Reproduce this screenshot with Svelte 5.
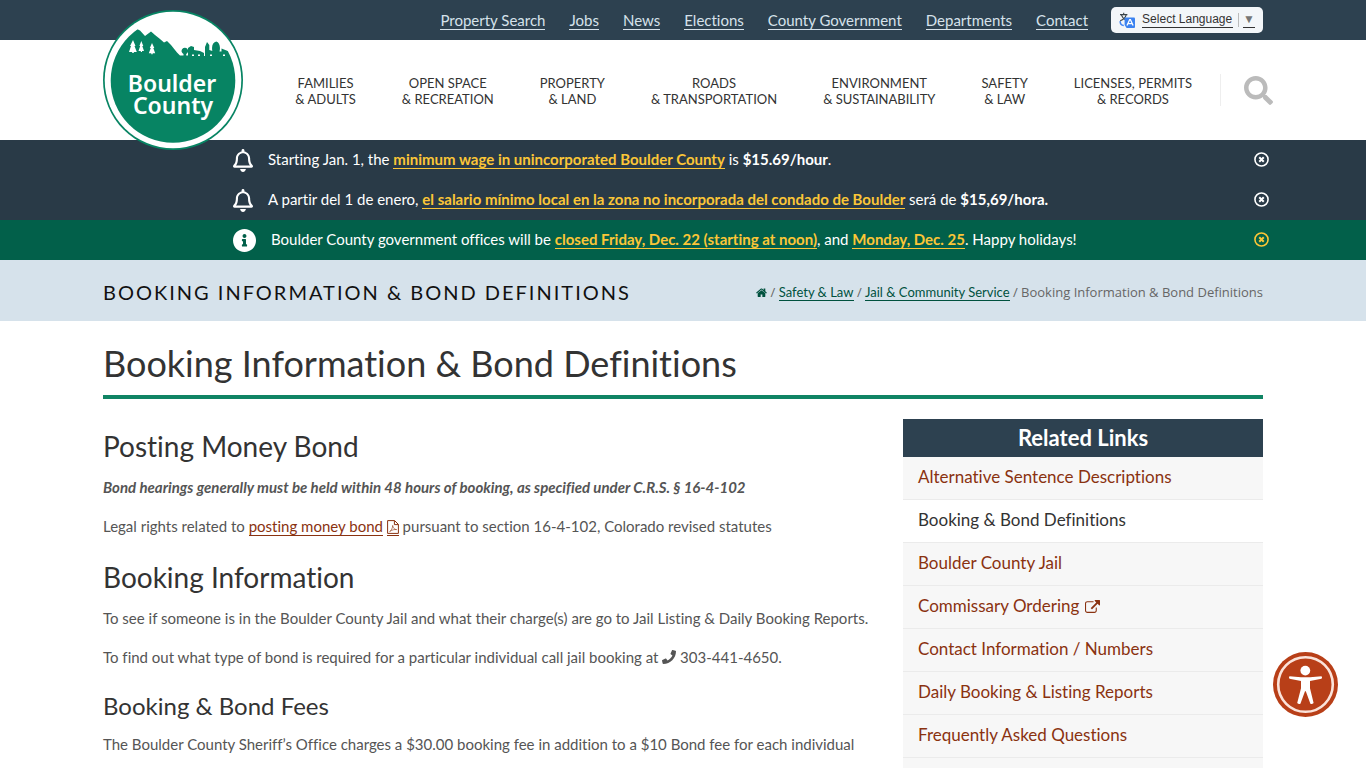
<script>
  const topLinks = ['Property Search', 'Jobs', 'News', 'Elections', 'County Government', 'Departments', 'Contact'];
  const sections = [
    ['Families', '& Adults'],
    ['Open Space', '& Recreation'],
    ['Property', '& Land'],
    ['Roads', '& Transportation'],
    ['Environment', '& Sustainability'],
    ['Safety', '& Law'],
    ['Licenses, Permits', '& Records']
  ];
  const related = [
    { label: 'Alternative Sentence Descriptions' },
    { label: 'Booking & Bond Definitions', current: true },
    { label: 'Boulder County Jail' },
    { label: 'Commissary Ordering', external: true },
    { label: 'Contact Information / Numbers' },
    { label: 'Daily Booking & Listing Reports' },
    { label: 'Frequently Asked Questions' }
  ];
</script>

{#snippet bell()}
  <svg class="bell" viewBox="0 0 448 512" aria-hidden="true"><path fill="currentColor" d="M439.39 362.29c-19.32-20.76-55.47-51.99-55.47-154.29 0-77.7-54.48-139.9-127.94-155.16V32c0-17.67-14.32-32-31.98-32s-31.98 14.33-31.98 32v20.84C118.56 68.1 64.08 130.3 64.08 208c0 102.3-36.15 133.53-55.47 154.29-6 6.45-8.66 14.16-8.61 21.71.11 16.4 12.98 32 32.1 32h383.8c19.12 0 32-15.6 32.1-32 .05-7.55-2.61-15.27-8.61-21.71zM67.53 368c21.22-27.97 44.42-74.33 44.53-159.42 0-.2-.06-.38-.06-.58 0-61.86 50.14-112 112-112s112 50.14 112 112c0 .2-.06.38-.06.58.11 85.1 23.31 131.46 44.53 159.42H67.53zM224 512c35.32 0 63.97-28.65 63.97-64H160.03c0 35.35 28.65 64 63.97 64z"/></svg>
{/snippet}

{#snippet close()}
  <button class="close" type="button" aria-label="Dismiss">
    <svg viewBox="0 0 16 16" aria-hidden="true"><circle cx="8" cy="8" r="7" fill="none" stroke="currentColor" stroke-width="1.700"/><path d="M5.600 5.600l4.800 4.800M10.400 5.600l-4.800 4.800" stroke="currentColor" stroke-width="2.100"/></svg>
  </button>
{/snippet}

<div class="page">
  <header>
    <div class="topbar">
      <div class="wrap topbar-in">
        <nav class="top-links" aria-label="Quick links">
          {#each topLinks as l}<a href="#top">{l}</a>{/each}
        </nav>
        <label class="translate">
          <svg viewBox="0 0 16 16" aria-hidden="true">
            <path d="M1 2.6h7.4M4.7.8v1.8M7.2 2.8C6.500 5.400 4.200 7.600 1.200 8.700M2.500 3.200c.8 2 2.600 4 4.400 5.200" fill="none" stroke="#3a4448" stroke-width="1.100"/>
            <path d="M1.300 9.200c-.4 2.700 1 4.300 3.500 4.300" fill="none" stroke="#4285f4" stroke-width="1.600"/>
            <path d="M5.600 5.600H15a1 1 0 0 1 1 1V15a1 1 0 0 1-1 1H7.600L5.600 13z" fill="#3b82f0"/>
            <path d="M8 13.600l2.700-6h.7l2.700 6M9 11.600h4" fill="none" stroke="#fff" stroke-width="1.300"/>
          </svg>
          <select aria-label="Select Language"><option>Select Language</option></select>
          <span class="bar"></span>
          <span class="arrow">▼</span>
        </label>
      </div>
    </div>

    <div class="wrap masthead">
      <a class="logo" href="#home" aria-label="Boulder County home">
        <svg viewBox="0 0 140 140">
          <defs><clipPath id="disc"><circle cx="70" cy="70.500" r="62.300"/></clipPath></defs>
          <circle cx="70" cy="70" r="70" fill="#078463"/>
          <circle cx="70" cy="70" r="68.300" fill="#fff"/>
          <g clip-path="url(#disc)">
            <path fill="#078463" d="M0 40L19 32L24 26L28 23.500L34 19L37 20.500L42 26L48 21.500L52 25L57 29L61 32.500L64 31L68 35L74 42.500L77 45.600H80.500V44a3.300 3.300 0 1 1 2.700 0V45.600H85V38l3-2l3 1v3l6 1l4 2v3h1V37l2-5l2.300 3v5l3 1c-1-6 1-9 4-9.500c3 1 4.500 5 3.200 10h2v-3l5 2l3 1v-3.500h5V46H140V140H0z"/>
            <path fill="#fff" d="M30 30l2.500 6h-1l2.300 6h-3v1h-1.600v-1H26l2-6h-1zM38.300 31l2 5h-1l1.700 5h-2v1h-1.200v-1H35.500l1.700-5h-.8zM49 33l2.300 5h-1l1.900 5.300h-2.500v1h-1.400v-1H45.800l2-5.300h-1z"/>
            <path fill="#fff" d="M89 46h2v-1.500h-2zM95 46h2v-1.500h-2zM107 46h2v-1.500h-2zM120 46h2v-1.500h-2z"/>
          </g>
          <text x="69" y="82" text-anchor="middle">Boulder</text>
          <text x="70" y="104" text-anchor="middle">County</text>
        </svg>
      </a>
      <nav class="sections" aria-label="Main">
        {#each sections as s}<a href="#section">{s[0]}<br />{s[1]}</a>{/each}
      </nav>
      <button class="search" type="button" aria-label="Search">
        <svg viewBox="0 0 512 512" aria-hidden="true"><path fill="currentColor" d="M505 442.700L405.300 343c-4.500-4.500-10.600-7-17-7H372c27.600-35.300 44-79.700 44-128C416 93.100 322.900 0 208 0S0 93.100 0 208s93.100 208 208 208c48.300 0 92.700-16.400 128-44v16.300c0 6.400 2.500 12.500 7 17l99.700 99.700c9.400 9.400 24.600 9.400 33.900 0l28.300-28.300c9.400-9.400 9.400-24.600.1-34zM208 336c-70.700 0-128-57.200-128-128 0-70.700 57.200-128 128-128 70.700 0 128 57.200 128 128 0 70.700-57.200 128-128 128z"/></svg>
      </button>
    </div>
  </header>

  <div class="alerts">
    <div class="alert">
      <div class="wrap alert-in">
        {@render bell()}
        <p>Starting Jan. 1, the <a href="#wage">minimum wage in unincorporated Boulder County</a> is <b>$15.69/hour</b>.</p>
        {@render close()}
      </div>
    </div>
    <div class="alert">
      <div class="wrap alert-in">
        {@render bell()}
        <p>A partir del 1 de enero, <a href="#salario">el salario mínimo local en la zona no incorporada del condado de Boulder</a> será de <b>$15,69/hora.</b></p>
        {@render close()}
      </div>
    </div>
    <div class="alert info">
      <div class="wrap alert-in">
        <svg class="info-icon" viewBox="8 8 496 496" aria-hidden="true"><path fill="currentColor" d="M256 8C119.043 8 8 119.083 8 256c0 136.997 111.043 248 248 248s248-111.003 248-248C504 119.083 392.957 8 256 8zm0 110c23.196 0 42 18.804 42 42s-18.804 42-42 42-42-18.804-42-42 18.804-42 42-42zm56 254c0 6.627-5.373 12-12 12h-88c-6.627 0-12-5.373-12-12v-24c0-6.627 5.373-12 12-12h12v-64h-12c-6.627 0-12-5.373-12-12v-24c0-6.627 5.373-12 12-12h64c6.627 0 12 5.373 12 12v100h12c6.627 0 12 5.373 12 12v24z"/></svg>
        <p>Boulder County government offices will be <a href="#closed">closed Friday, Dec. 22 (starting at noon)</a>, and <a href="#closed">Monday, Dec. 25</a>. Happy holidays!</p>
        {@render close()}
      </div>
    </div>
  </div>

  <div class="titlebar">
    <div class="wrap titlebar-in">
      <div class="kicker">Booking Information &amp; Bond Definitions</div>
      <nav class="crumbs" aria-label="Breadcrumb">
        <a class="home" href="#home" aria-label="Home"><svg viewBox="64 200 1664 1336" aria-hidden="true"><path fill="currentColor" d="M1472 992v480q0 26-19 45t-45 19h-384v-384h-256v384h-384q-26 0-45-19t-19-45v-480q0-1 .5-3t.5-3l575-474 575 474q1 2 1 6zm223-69l-62 74q-8 9-21 11h-3q-13 0-21-7l-692-577-692 577q-12 8-24 7-13-2-21-11l-62-74q-8-10-7-23.500t11-21.500l719-599q32-26 76-26t76 26l244 204v-195q0-14 9-23t23-9h192q14 0 23 9t9 23v408l219 182q10 8 11 21.500t-7 23.500z"/></svg></a>
        / <a href="#safety">Safety &amp; Law</a> / <a href="#jail">Jail &amp; Community Service</a> / Booking Information &amp; Bond Definitions
      </nav>
    </div>
  </div>

  <div class="wrap body">
    <h1>Booking Information &amp; Bond Definitions</h1>
    <div class="columns">
      <main>
        <h2>Posting Money Bond</h2>
        <p><b><i>Bond hearings generally must be held within 48 hours of booking, as specified under C.R.S. § 16-4-102</i></b></p>
        <p>Legal rights related to <a href="#bond">posting money bond</a> <a class="pdf" href="#bond" aria-label="PDF"><svg viewBox="0 0 12 14" aria-hidden="true"><path d="M.6.6h7l3.800 3.800v9H.6zM7.400.8v3.800h4" fill="none" stroke="currentColor" stroke-width="1"/><path d="M2.600 11.600c1.600-.8 3.100-3.800 3.100-6.200c.2 2.400 1.600 4.200 4 4.200c-2.400-.3-4.600.2-7.100 2z" fill="none" stroke="currentColor" stroke-width=".6"/></svg></a> pursuant to section 16-4-102, Colorado revised statutes</p>
        <h2>Booking Information</h2>
        <p>To see if someone is in the Boulder County Jail and what their charge(s) are go to Jail Listing &amp; Daily Booking Reports.</p>
        <p>To find out what type of bond is required for a particular individual call jail booking at <svg class="phone" viewBox="0 0 512 512" aria-hidden="true"><path fill="currentColor" d="M493.400 24.600l-104-24c-11.300-2.600-22.900 3.300-27.500 13.900l-48 112c-4.200 9.800-1.400 21.300 6.900 28l60.600 49.600c-36 76.700-98.900 140.500-177.200 177.200l-49.600-60.600c-6.800-8.300-18.200-11.100-28-6.900l-112 48C3.900 366.500-2 378.100.6 389.400l24 104C27.100 504.200 36.700 512 48 512c256.100 0 464-207.500 464-464 0-11.200-7.700-20.900-18.600-23.400z"/></svg> 303-441-4650.</p>
        <h3>Booking &amp; Bond Fees</h3>
        <p>The Boulder County Sheriff’s Office charges a $30.00 booking fee in addition to a $10 Bond fee for each individual</p>
      </main>
      <aside>
        <h2>Related Links</h2>
        <ul>
          {#each related as r}
            <li class:current={r.current}>
              <a href="#related">{r.label}{#if r.external}{' '}<svg viewBox="0 0 1792 1536" aria-hidden="true"><path fill="currentColor" d="M1408 928v320q0 119-84.500 203.500t-203.500 84.500h-832q-119 0-203.500-84.500t-84.500-203.500v-832q0-119 84.500-203.500t203.500-84.500h704q14 0 23 9t9 23v64q0 14-9 23t-23 9h-704q-66 0-113 47t-47 113v832q0 66 47 113t113 47h832q66 0 113-47t47-113v-320q0-14 9-23t23-9h64q14 0 23 9t9 23zm384-864v512q0 26-19 45t-45 19-45-19l-176-176-652 652q-10 10-23 10t-23-10l-114-114q-10-10-10-23t10-23l652-652-176-176q-19-19-19-45t19-45 45-19h512q26 0 45 19t19 45z"/></svg>{/if}</a>
            </li>
          {/each}
        </ul>
      </aside>
    </div>
  </div>

  <button class="access" type="button" aria-label="Accessibility options">
    <svg viewBox="0 0 65 65" aria-hidden="true">
      <circle cx="32.500" cy="32.500" r="32.500" fill="#b83f18"/>
      <circle cx="32.500" cy="32.500" r="27.300" fill="none" stroke="#fbe3da" stroke-width="2.600"/>
      <circle cx="32.300" cy="18.600" r="4.900" fill="#fff"/>
      <path fill="#fff" d="M16.500 24.200l11.500 1h9l11.500-1q1.200 1.300 0 2.600l-11.500 2.200v7.200l3.600 14.800q-1.500 1.700-3.200.8l-4.600-12.600h-.8l-4.600 12.600q-1.700.9-3.200-.8l3.800-14.800v-7.200l-11.500-2.200q-1.200-1.300 0-2.600z"/>
    </svg>
  </button>
</div>

<style>
  :global(body) { background: #fff; }
  .page {
    min-height: 100vh;
    display: flex;
    flex-direction: column;
    font: 15px/24px Lato, sans-serif;
    font-variant-ligatures: none;
    color: #555;
  }
  .page :global(*) { box-sizing: border-box; }
  .wrap { width: 100%; max-width: 1160px; margin: 0 auto; }
  button { border: 0; padding: 0; background: none; cursor: pointer; }
  svg { display: block; }

  .topbar { background: #2d4150; }
  .topbar-in { display: flex; justify-content: flex-end; align-items: center; gap: 23px; height: 40px; }
  .top-links { display: flex; gap: 24px; }
  .top-links a { color: #d6e2eb; font-size: 15px; line-height: 18px; border-bottom: 1px solid; text-decoration: none; }
  .translate { display: flex; align-items: center; height: 26px; padding: 0 8px; border-radius: 5px; background: #f3f6f9; font: 12px/15px "Liberation Sans", Arial, sans-serif; color: #333; }
  .translate svg { width: 16px; height: 16px; margin-right: 7px; }
  .translate select { appearance: none; border: 0; border-bottom: 1px solid #333; border-radius: 0; padding: 0; background: none; color: inherit; font: inherit; }
  .bar { width: 1px; height: 14px; margin: 0 4px 0 5px; background: #bbb; }
  .arrow { color: #767676; border-bottom: 1px solid #333; }

  .masthead { display: flex; height: 100px; align-items: center; position: relative; }
  .logo { position: absolute; left: 0; top: -30px; width: 140px; height: 140px; z-index: 1; }
  .logo text { font: 600 23px "Noto Sans", sans-serif; fill: #fff; }
  .sections { flex: 1; display: flex; justify-content: flex-end; gap: 46px; margin-top: 2px; }
  .sections a { color: #333; font-size: 13px; line-height: 16px; text-align: center; text-transform: uppercase; text-decoration: none; }
  .search { height: 32px; margin: 0 -10px 0 28px; padding-left: 23px; border-left: 1px solid #eee; color: #bbb; }
  .search svg { width: 29px; height: 29px; }

  .alert { background: #293a47; color: #fff; }
  .alert.info { background: #02604a; }
  .alert-in { display: flex; align-items: center; height: 40px; padding-left: 130px; }
  .alert p { flex: 1; margin: 0; padding-bottom: 2px; font-size: 15px; line-height: 18px; }
  .alert a { color: #fbc637; font-weight: 700; text-decoration: none; border-bottom: 1px solid; }
  .bell { width: 20px; height: 23px; margin-right: 15px; }
  .info-icon { width: 23px; height: 23px; margin-right: 15px; }
  .close { color: #fff; margin-right: -6px; padding-bottom: 2px; }
  .close svg { width: 15px; height: 15px; }
  .info .close { color: #fbc637; }

  .titlebar { background: #d6e2eb; }
  .titlebar-in { display: flex; justify-content: space-between; align-items: center; height: 61px; padding-top: 3px; }
  .kicker { font-size: 20px; letter-spacing: 2px; color: #111; text-transform: uppercase; }
  .crumbs { font: 13px/17px "Open Sans", sans-serif; color: #666; }
  .crumbs a { font-family: Lato, sans-serif; color: #00513e; text-decoration: none; border-bottom: 1px solid; }
  .crumbs .home { border: 0; }
  .home svg { display: inline-block; width: 11px; height: 9px; }

  .body { flex: 1; display: flex; flex-direction: column; }
  h1, h2, h3 { margin: 0; font-weight: 400; color: #333; }
  h1 { padding: 19px 0 9px; font-size: 36px; line-height: 46px; border-bottom: 4px solid #108464; }
  .columns { flex: 1; display: grid; grid-template-columns: minmax(0, 1fr) 360px; gap: 24px; padding-top: 20px; }
  main h2 { font-size: 28px; line-height: 36px; margin: 9px 0 11px; }
  main p { margin: 0 0 15px; }
  main p + h2 { margin-top: 21px; }
  main h3 { font-size: 24px; line-height: 32px; margin: 21px 0 10px; }
  main a { color: #8a3210; text-decoration: none; border-bottom: 1px solid; }
  .pdf svg { display: inline-block; width: 12px; height: 14px; vertical-align: -2px; }
  .phone { display: inline-block; width: 14px; height: 14px; vertical-align: -1px; }

  aside { background: #f7f7f7; }
  aside h2 { background: #2d4150; color: #fff; font-size: 22px; font-weight: 700; line-height: 38px; text-align: center; }
  ul { list-style: none; margin: 0; padding: 0; }
  li { padding: 7px 15px 9px; border-bottom: 1px solid #ebebeb; line-height: 26px; font-size: 17px; }
  li a { color: #8a3210; text-decoration: none; }
  li svg { display: inline-block; width: 15px; height: 13px; margin-left: 1px; vertical-align: -1px; }
  .current { background: #fff; }
  .current a { color: #333; }

  .access { position: fixed; right: 28px; bottom: 51px; width: 65px; height: 65px; }
</style>
